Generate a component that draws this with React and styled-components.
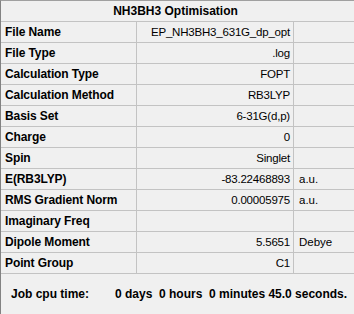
import React from "react";
import styled, { createGlobalStyle } from "styled-components";

const Global = createGlobalStyle`
  html, body { margin: 0; padding: 0; background: #f0f0f0; }
  body { font-family: "Liberation Sans", Arial, sans-serif; }
`;

const Panel = styled.div`
  width: 354px;
  height: 314px;
  box-sizing: border-box;
  background: #f0f0f0;
  border-top: 1px solid #a0a0a0;
  border-left: 1px solid #828282;
  display: flex;
  flex-direction: column;
  color: #000;
`;

const Title = styled.div`
  height: 20px;
  border-bottom: 1px solid #c3c3c3;
  display: flex;
  align-items: center;
  justify-content: center;
  font-weight: bold;
  font-size: 12px;
  padding-right: 4px;
`;

const Row = styled.div`
  display: grid;
  grid-template-columns: 136px 157px 1fr;
  height: 20px;
  border-bottom: 1px solid #c3c3c3;
`;

const Label = styled.div`
  border-right: 1px solid #c3c3c3;
  display: flex;
  align-items: center;
  padding-left: 4px;
  font-weight: bold;
  font-size: 12px;
  letter-spacing: -0.1px;
  white-space: nowrap;
`;

const Value = styled.div`
  border-right: 1px solid #c3c3c3;
  display: flex;
  align-items: center;
  justify-content: flex-end;
  padding-right: 3px;
  font-size: 11.5px;
  letter-spacing: -0.2px;
  white-space: nowrap;
`;

const Unit = styled.div`
  display: flex;
  align-items: center;
  padding-left: 5px;
  font-size: 11.5px;
  white-space: nowrap;
`;

const Footer = styled.div`
  flex: 1;
  display: flex;
  align-items: center;
  padding-left: 10px;
  padding-bottom: 1px;
  font-weight: bold;
  font-size: 12px;
  white-space: pre;
`;

const FooterLabel = styled.span`
  width: 104px;
`;

const rows = [
  ["File Name", "EP_NH3BH3_631G_dp_opt", ""],
  ["File Type", ".log", ""],
  ["Calculation Type", "FOPT", ""],
  ["Calculation Method", "RB3LYP", ""],
  ["Basis Set", "6-31G(d,p)", ""],
  ["Charge", "0", ""],
  ["Spin", "Singlet", ""],
  ["E(RB3LYP)", "-83.22468893", "a.u."],
  ["RMS Gradient Norm", "0.00005975", "a.u."],
  ["Imaginary Freq", "", ""],
  ["Dipole Moment", "5.5651", "Debye"],
  ["Point Group", "C1", ""],
];

export default function App() {
  return (
    <>
      <Global />
      <Panel>
        <Title>NH3BH3 Optimisation</Title>
        {rows.map(([l, v, u]) => (
          <Row key={l}>
            <Label>{l}</Label>
            <Value>{v}</Value>
            <Unit>{u}</Unit>
          </Row>
        ))}
        <Footer>
          <FooterLabel>Job cpu time:</FooterLabel>
          <span>0 days  0 hours  0 minutes 45.0 seconds.</span>
        </Footer>
      </Panel>
    </>
  );
}
